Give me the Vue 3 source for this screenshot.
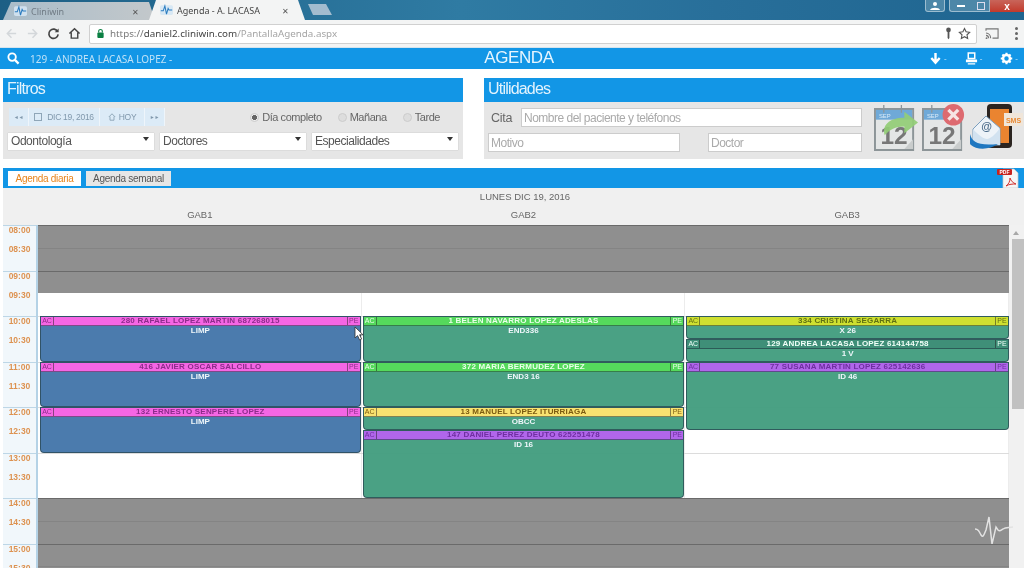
<template>
  <div class="page">
    <!-- barra de pestañas del navegador -->
    <div class="tabstrip">
      <div class="tab">
        <svg class="favicon" viewBox="0 0 16 14"><rect x="0" y="1" width="16" height="12" rx="2" fill="#cfe0ee" /><path d="M1 8h3l2-6 2 10 2-7 1 2h4" fill="none" stroke="#2b7cc0" stroke-width="1.3" /></svg>
        <span class="tab-title">Cliniwin</span>
        <span class="tab-x">✕</span>
      </div>
      <div class="tab active">
        <svg class="favicon" viewBox="0 0 16 14"><rect x="0" y="1" width="16" height="12" rx="2" fill="#d8e8f4" /><path d="M1 8h3l2-6 2 10 2-7 1 2h4" fill="none" stroke="#2b7cc0" stroke-width="1.3" /></svg>
        <span class="tab-title">Agenda - A. LACASA</span>
        <span class="tab-x">✕</span>
      </div>
      <div class="newtab"></div>
      <div class="winctl">
        <div class="winbtn user">
          <svg viewBox="0 0 12 8" width="12" height="8"><circle cx="6" cy="2" r="2" fill="#fff" /><path d="M1 8c1-3 9-3 10 0z" fill="#fff" /></svg>
        </div>
        <div class="winbtn min"><span class="dash"></span></div>
        <div class="winbtn max"><span class="sq"></span></div>
        <div class="winbtn close">x</div>
      </div>
    </div>

    <!-- barra de direcciones -->
    <div class="toolbar">
      <svg class="navicon" viewBox="0 0 14 14"><path d="M12 7H3M7 2.500 2.500 7 7 11.500" fill="none" stroke="#d3d7da" stroke-width="1.6" /></svg>
      <svg class="navicon" viewBox="0 0 14 14"><path d="M2 7h9M7 2.500 11.500 7 7 11.500" fill="none" stroke="#d3d7da" stroke-width="1.6" /></svg>
      <svg class="navicon" viewBox="0 0 14 14"><path d="M11.500 5A5 5 0 1 0 12 8" fill="none" stroke="#444" stroke-width="1.8" /><path d="M12.500 1.500v4.200H8.300z" fill="#444" /></svg>
      <svg class="navicon" viewBox="0 0 14 14"><path d="M1.500 7 7 1.800 12.500 7M3.500 6v6h7V6" fill="none" stroke="#444" stroke-width="1.5" /></svg>
      <div class="omnibox">
        <svg class="lock" viewBox="0 0 10 12"><path d="M3 5V3.500a2 2 0 0 1 4 0V5" fill="none" stroke="#0b8043" stroke-width="1.2" /><rect x="1.500" y="5" width="7" height="6" rx="1" fill="#0b8043" /></svg>
        <span class="url"><span class="url-a">https://</span><span class="url-b">daniel2.cliniwin.com</span><span class="url-c">/PantallaAgenda.aspx</span></span>
        <svg class="omni-icon key" viewBox="0 0 10 14"><circle cx="5" cy="3" r="2.600" fill="#555" /><path d="M4 5h2v7l-1 1.500L4 12z" fill="#555" /></svg>
        <svg class="omni-icon" viewBox="0 0 14 14"><path d="m7 1.600 1.700 3.600 3.800.5-2.800 2.700.7 3.900L7 10.400l-3.400 1.900.7-3.900L1.500 5.700l3.800-.5z" fill="none" stroke="#555" stroke-width="1.2" /></svg>
      </div>
      <svg class="cast" viewBox="0 0 16 14"><path d="M1 4V2h13v10H8M1 6.500a5.500 5.500 0 0 1 5 5.500M1 9a3 3 0 0 1 2.800 3" fill="none" stroke="#777" stroke-width="1.2" /><circle cx="1.600" cy="12" r="1" fill="#777" /></svg>
      <div class="dots"><i></i><i></i><i></i></div>
    </div>

    <!-- barra de la aplicación -->
    <div class="appbar">
      <div class="app-left">
        <svg class="app-search" viewBox="0 0 14 14"><circle cx="5.500" cy="5.500" r="4" fill="none" stroke="#fff" stroke-width="2" /><path d="m8.500 8.500 4 4" stroke="#fff" stroke-width="2.400" /></svg>
        <span class="app-user">129 - ANDREA LACASA LOPEZ -</span>
      </div>
      <div class="app-title">AGENDA</div>
      <div class="app-right">
        <span class="app-tool"><svg viewBox="0 0 14 14"><path d="M7 1v10M2.500 6.500 7 11.500l4.500-5" fill="none" stroke="#fff" stroke-width="2.600" /></svg><b>-</b></span>
        <span class="app-tool"><svg viewBox="0 0 14 14"><path d="M3.500 1h7v6h-7z" fill="none" stroke="#fff" stroke-width="1.600" /><path d="M1 8h12v3H1zM3 12h8v1.500H3z" fill="#fff" /></svg><b>-</b></span>
        <span class="app-tool"><svg viewBox="0 0 14 14"><circle cx="7" cy="7" r="3.700" fill="none" stroke="#fff" stroke-width="2.600" /><path d="M7 .8v2.400M7 10.800v2.400M.8 7h2.400M10.800 7h2.400M2.600 2.600l1.700 1.700M9.700 9.700l1.700 1.700M2.600 11.400l1.700-1.700M9.700 4.300l1.700-1.700" stroke="#fff" stroke-width="2.300" /></svg><b>-</b></span>
      </div>
    </div>

    <!-- paneles -->
    <div class="panels">
      <section class="panel filtros">
        <h2>Filtros</h2>
        <div class="panel-body">
          <div class="filter-row">
            <div class="datebar">
              <span class="db-btn nav">◄◄</span>
              <span class="db-btn date"><i class="mini-cal"></i>DIC 19, 2016</span>
              <span class="db-btn hoy"><svg viewBox="0 0 10 10" width="8" height="8"><path d="M1 5 5 1l4 4M2.500 4.500V9h5V4.500" fill="none" stroke="#8fa6b8" stroke-width="1.200" /></svg>HOY</span>
              <span class="db-btn nav">►►</span>
            </div>
            <div class="radios">
              <label v-for="r in radios" :key="r.label" class="radio">
                <i class="dot" :class="{ on: r.on }"></i>{{ r.label }}
              </label>
            </div>
          </div>
          <div class="selects">
            <div v-for="s in selects" :key="s" class="selwrap">
              <select><option>{{ s }}</option></select>
            </div>
          </div>
        </div>
      </section>

      <section class="panel utilidades">
        <h2>Utilidades</h2>
        <div class="panel-body util-body">
          <div class="util-form">
            <div class="util-row first">
              <label class="cita">Cita</label>
              <input class="inp nombre" type="text" placeholder="Nombre del paciente y teléfonos" />
            </div>
            <div class="util-row">
              <input class="inp motivo" type="text" placeholder="Motivo" />
              <input class="inp doctor" type="text" placeholder="Doctor" />
            </div>
          </div>
          <div class="util-icons">
            <svg class="cal" viewBox="0 0 46 48">
              <path d="M1 5h39v42H1z" fill="#e4e6e6" stroke="#8d9598" stroke-width="2" />
              <rect x="2" y="6" width="37" height="10" fill="#6fa9d8" />
              <path d="M10 1v8M28 1v8" stroke="#8d9598" stroke-width="1.300" />
              <path d="M40 36 31 46h9z" fill="#c9cccc" />
              <text x="5" y="14" class="cal-sep">SEP</text>
              <text x="20.500" y="41" class="cal-num">12</text>
              <path d="M11 32c-3-10 4-18 20-18V8l14 11-14 11v-7c-9 0-15 3-20 9z" fill="#93cd76" opacity=".92" />
            </svg>
            <svg class="cal" viewBox="0 0 46 48">
              <path d="M1 5h39v42H1z" fill="#e4e6e6" stroke="#8d9598" stroke-width="2" />
              <rect x="2" y="6" width="37" height="10" fill="#6fa9d8" />
              <path d="M10 1v8M28 1v8" stroke="#8d9598" stroke-width="1.300" />
              <path d="M40 36 31 46h9z" fill="#c9cccc" />
              <text x="5" y="14" class="cal-sep">SEP</text>
              <text x="20.500" y="41" class="cal-num">12</text>
              <circle cx="32" cy="11" r="11" fill="#dd6a70" />
              <path d="m27 6 10 10M37 6 27 16" stroke="#f6e4e4" stroke-width="3.400" />
            </svg>
            <svg class="sms" viewBox="0 0 54 46">
              <rect x="17" y="0" width="25" height="44" rx="4" fill="#2b2420" />
              <rect x="20" y="5" width="19" height="34" fill="#ea8430" />
              <rect x="34" y="9" width="19" height="13" fill="#f0e6da" />
              <text x="43.500" y="18.500" class="sms-text">SMS</text>
              <path d="M3 25 16 12l14 12v17H3z" fill="#eef3f8" stroke="#7b9fbf" stroke-width="1" />
              <path d="M3 25c5 6 11 10 14 10s8-4 13-11v17H3z" fill="#d2e2f0" />
              <path d="M0 30c2 8 8 12 28 10-8 6-22 6-27 1-2-2-2-7-1-11z" fill="#1f77c0" />
              <text x="16.500" y="26" class="at">@</text>
            </svg>
          </div>
        </div>
      </section>
    </div>

    <!-- pestañas de agenda -->
    <div class="viewbar">
      <button class="vtab on">Agenda diaria</button>
      <button class="vtab">Agenda semanal</button>
      <svg class="pdf" viewBox="0 0 22 21">
        <path d="M6 1h11l4 4v15H6z" fill="#f6f6f6" stroke="#c8c8c8" stroke-width=".7" />
        <rect x="0" y="1" width="15" height="6" rx="1" fill="#c8231f" />
        <text x="7.500" y="5.800" class="pdf-text">PDF</text>
        <path d="M9 18c3-2 4-5 4-8 1 3 3 5 6 6-3 0-7 0-10 2z" fill="none" stroke="#d0302c" stroke-width="1" />
      </svg>
    </div>

    <!-- cabecera del calendario -->
    <div class="cal-head">
      <div class="cal-date">LUNES DIC 19, 2016</div>
      <div class="cal-cols">
        <span></span>
        <span v-for="c in columns" :key="c.name" class="cal-col-name">{{ c.name }}</span>
        <span></span>
      </div>
    </div>

    <!-- calendario -->
    <div class="calendar">
      <div class="hours">
        <div v-for="h in hours" :key="h" class="hour">
          <span>{{ h }}:00</span>
          <span>{{ h }}:30</span>
        </div>
      </div>
      <div v-for="c in columns" :key="c.name" class="col">
        <div
          v-for="(s, i) in slots"
          :key="i"
          class="slot"
          :class="{ off: s.off, full: s.full }"
        ></div>
        <div
          v-for="e in c.events"
          :key="e.name"
          class="event"
          :class="e.body"
          :style="eventStyle(e)"
        >
          <div class="ev-head" :class="e.color">
            <span class="ev-tag">AC</span>
            <span class="ev-name">{{ e.name }}</span>
            <span class="ev-tag pe">PE</span>
          </div>
          <div class="ev-sub">{{ e.sub }}</div>
        </div>
      </div>
      <div class="scrollbar">
        <span class="arrow up"></span>
        <div class="thumb"></div>
        <span class="arrow down"></span>
      </div>

      <svg class="watermark" viewBox="0 0 38 28"><path d="M0 13c3 0 4 2 6 6 2 3 3 0 5-5l3-13 3 27 4-17 2 3c2 2 3 0 5-1 3-2 6-1 10-2" fill="none" stroke="#e2e2e2" stroke-width="1.500" /></svg>
      <svg class="pointer" viewBox="0 0 10 15"><path d="M1 1v11l2.600-2.400L5.600 14l2-1-2-4.200h3.400z" fill="#fff" stroke="#333" stroke-width=".8" /></svg>
    </div>
  </div>
</template>

<script setup>
const HOUR = 45.5

const radios = [
  { label: 'Día completo', on: true },
  { label: 'Mañana', on: false },
  { label: 'Tarde', on: false },
]
const selects = ['Odontología', 'Doctores', 'Especialidades']
const hours = ['08', '09', '10', '11', '12', '13', '14', '15']

const slots = Array.from({ length: 16 }, (_, i) => ({
  off: i < 3 || i >= 12,
  full: i % 2 === 0,
}))

// start y end en horas
const columns = [
  {
    name: 'GAB1',
    events: [
      { start: 10, end: 11, color: 'pink', body: 'blue', name: '280 RAFAEL LOPEZ MARTIN 687268015', sub: 'LIMP' },
      { start: 11, end: 12, color: 'pink', body: 'blue', name: '416 JAVIER OSCAR SALCILLO', sub: 'LIMP' },
      { start: 12, end: 13, color: 'pink', body: 'blue', name: '132 ERNESTO SENPERE LOPEZ', sub: 'LIMP' },
    ],
  },
  {
    name: 'GAB2',
    events: [
      { start: 10, end: 11, color: 'green', body: 'teal', name: '1 BELEN NAVARRO LOPEZ ADESLAS', sub: 'END336' },
      { start: 11, end: 12, color: 'green', body: 'teal', name: '372 MARIA BERMUDEZ LOPEZ', sub: 'END3 16' },
      { start: 12, end: 12.5, color: 'yellow', body: 'teal', name: '13 MANUEL LOPEZ ITURRIAGA', sub: 'OBCC' },
      { start: 12.5, end: 14, color: 'purple', body: 'teal', name: '147 DANIEL PEREZ DEUTO 625251478', sub: 'ID 16' },
    ],
  },
  {
    name: 'GAB3',
    events: [
      { start: 10, end: 10.5, color: 'lime', body: 'teal', name: '334 CRISTINA SEGARRA', sub: 'X 26' },
      { start: 10.5, end: 11, color: 'same', body: 'teal', name: '129 ANDREA LACASA LOPEZ 614144758', sub: '1 V' },
      { start: 11, end: 12.5, color: 'purple', body: 'teal', name: '77 SUSANA MARTIN LOPEZ 625142636', sub: 'ID 46' },
    ],
  },
]

const eventStyle = (e) => ({
  top: (e.start - 8) * HOUR + 'px',
  height: (e.end - e.start) * HOUR + 'px',
})
</script>

<style>
html,
body {
  margin: 0;
  background: #fff;
  overflow: hidden;
}
</style>

<style scoped>
.page {
  width: 1024px;
  height: 573px;
  overflow: hidden;
  display: flex;
  flex-direction: column;
  font-family: "Liberation Sans", Arial, sans-serif;
  color: #555;
  background: #fff;
  filter: blur(0.5px);
}

/* navegador */
.tabstrip {
  height: 20px;
  flex: none;
  display: flex;
  align-items: flex-end;
  padding-left: 3px;
  background: linear-gradient(90deg, #1d5f85 0%, #2f7ba3 45%, #286f9a 70%, #1f6590 100%);
}
.tab {
  width: 152px;
  height: 18px;
  margin-right: -6px;
  display: flex;
  align-items: center;
  padding: 0 6px 0 11px;
  box-sizing: border-box;
  background: linear-gradient(90deg, #a9bcc9, #c3c8cb);
  clip-path: polygon(0 100%, 8px 0, 146px 0, 152px 100%);
  font-family: "Noto Sans", sans-serif;
  font-size: 9px;
  color: #6f7a84;
}
.tab.active {
  width: 156px;
  height: 20px;
  background: #f3f4f4;
  color: #444;
  padding-left: 11px;
  clip-path: polygon(0 100%, 7px 0, 149px 0, 156px 100%);
}
.favicon {
  width: 13px;
  height: 12px;
  margin-right: 4px;
  flex: none;
}
.tab-title {
  flex: 1;
  white-space: nowrap;
}
.tab-x {
  font-size: 8px;
  color: #555;
  margin-right: 10px;
}
.newtab {
  width: 24px;
  height: 11px;
  margin: 0 0 5px 9px;
  background: #a3bccf;
  clip-path: polygon(0 0, 18px 0, 24px 100%, 5px 100%);
}
.winctl {
  margin-left: auto;
  align-self: flex-start;
  display: flex;
  height: 12px;
}
.winbtn {
  height: 12px;
  display: flex;
  align-items: center;
  justify-content: center;
  box-sizing: border-box;
  background: #4d87a8;
  border: 1px solid #9cbdd0;
  border-top: 0;
}
.user {
  width: 20px;
  margin-right: 4px;
  border-radius: 0 0 3px 3px;
}
.min {
  width: 23px;
  border-right: 0;
  border-radius: 0 0 0 3px;
}
.max {
  width: 18px;
  border-left: 0;
}
.close {
  width: 34px;
  background: linear-gradient(#c8655a, #c23a2c);
  border: 0;
  color: #fff;
  font-size: 10px;
  font-weight: bold;
}
.dash {
  width: 8px;
  height: 2px;
  background: #fff;
}
.sq {
  width: 6px;
  height: 6px;
  border: 1px solid #dde;
}
.toolbar {
  height: 27px;
  flex: none;
  display: flex;
  align-items: center;
  padding-left: 5px;
  background: #f3f4f4;
  border-bottom: 1px solid #d5e4ee;
}
.navicon {
  width: 13px;
  height: 13px;
  margin-right: 8px;
}
.omnibox {
  width: 888px;
  height: 20px;
  box-sizing: border-box;
  display: flex;
  align-items: center;
  background: #fff;
  border: 1px solid #d0d0d0;
  border-radius: 2px;
  padding: 0 5px 0 6px;
}
.lock {
  width: 9px;
  height: 11px;
  margin-right: 5px;
}
.url {
  flex: 1;
  font-family: "Noto Sans", sans-serif;
  font-size: 9.800px;
  white-space: nowrap;
}
.url-a {
  color: #7a7a7a;
}
.url-b {
  color: #444;
}
.url-c {
  color: #a5a5a5;
}
.omni-icon {
  width: 13px;
  height: 13px;
  margin-left: 5px;
}
.key {
  width: 9px;
}
.cast {
  width: 15px;
  height: 13px;
  margin-left: 8px;
}
.dots {
  display: flex;
  flex-direction: column;
  gap: 2px;
  margin-left: 15px;
}
.dots i {
  width: 3px;
  height: 3px;
  border-radius: 50%;
  background: #666;
}

/* barra azul */
.appbar {
  height: 21px;
  flex: none;
  display: grid;
  grid-template-columns: 1fr auto 1fr;
  align-items: center;
  background: #1296e6;
  color: #fff;
}
.app-left {
  display: flex;
  align-items: center;
  padding-left: 7px;
}
.app-search {
  width: 13px;
  height: 13px;
  margin-right: 10px;
}
.app-user {
  font-family: "Noto Sans", sans-serif;
  font-size: 10px;
  color: #bfe2f8;
  white-space: nowrap;
}
.app-title {
  font-size: 17px;
  letter-spacing: -0.4px;
  line-height: 19px;
  color: #e6f5fe;
  transform: translateX(7px) translateY(-1px);
}
.app-right {
  display: flex;
  justify-content: flex-end;
  gap: 18px;
  padding-right: 6px;
}
.app-tool {
  display: flex;
  align-items: center;
  gap: 2px;
}
.app-tool svg {
  width: 13px;
  height: 13px;
}
.app-tool b {
  font-size: 8px;
  font-weight: normal;
  color: #cbe8fb;
}

/* paneles */
.panels {
  flex: none;
  display: flex;
  justify-content: space-between;
  margin-top: 9px;
  padding-left: 3px;
}
.panel h2 {
  margin: 0;
  height: 24px;
  line-height: 22px;
  padding-left: 4px;
  font-size: 16px;
  font-weight: normal;
  letter-spacing: -0.8px;
  color: #e3f3fd;
  background: #1296e6;
}
.panel-body {
  height: 57px;
  background: #e6e6e6;
  box-sizing: border-box;
}
.filtros {
  width: 460px;
}
.utilidades {
  width: 540px;
}
.filter-row {
  display: flex;
  align-items: flex-start;
  justify-content: space-between;
  height: 27px;
  padding: 6px 23px 0 6px;
  box-sizing: border-box;
}
.datebar {
  display: flex;
  height: 18px;
  background: #dcebf7;
  font-size: 8.500px;
  letter-spacing: -0.3px;
  color: #8098ac;
}
.db-btn {
  display: flex;
  align-items: center;
  justify-content: center;
  gap: 3px;
  border-right: 1px solid #eef5fb;
}
.db-btn.nav {
  width: 19px;
  font-size: 5px;
}
.db-btn.date {
  width: 70px;
}
.db-btn.hoy {
  width: 44px;
}
.mini-cal {
  width: 6px;
  height: 6px;
  border: 1px solid #8fa6b8;
  margin-right: 2px;
}
.radios {
  display: flex;
  gap: 16px;
  height: 18px;
  font-size: 11px;
  letter-spacing: -0.45px;
  color: #666;
}
.radio {
  display: flex;
  align-items: center;
  gap: 3px;
}
.dot {
  width: 7px;
  height: 7px;
  border-radius: 50%;
  background: #ddd;
  border: 1px solid #ccc;
}
.dot.on {
  background: radial-gradient(circle, #666 45%, #eee 55%);
}
.selects {
  display: flex;
  gap: 6px;
  padding: 2px 0 0 5px;
}
.selwrap {
  width: 146px;
  height: 17px;
  position: relative;
}
.selwrap::after {
  content: "";
  position: absolute;
  right: 5px;
  top: 6px;
  border: 3px solid transparent;
  border-top: 4px solid #333;
  pointer-events: none;
}
.selwrap select {
  appearance: none;
  width: 100%;
  height: 100%;
  border: 0;
  border-radius: 0;
  background: #fff;
  padding: 0 0 0 3px;
  font: 12px "Liberation Sans", Arial, sans-serif;
  letter-spacing: -0.45px;
  color: #555;
  box-shadow: 0 0 1px #aaa;
}
.util-body {
  display: flex;
}
.util-form {
  width: 379px;
  padding: 6px 0 0 4px;
  box-sizing: border-box;
}
.util-row {
  display: flex;
  align-items: center;
  height: 19px;
}
.util-row.first {
  margin-bottom: 6px;
}
.cita {
  width: 33px;
  padding-left: 3px;
  box-sizing: border-box;
  font-size: 12.500px;
  letter-spacing: -0.3px;
  color: #666;
}
.inp {
  height: 19px;
  box-sizing: border-box;
  border: 1px solid #ccc;
  background: #fff;
  padding: 0 2px;
  font: 12px "Liberation Sans", Arial, sans-serif;
  letter-spacing: -0.5px;
  outline: none;
}
.inp::placeholder {
  color: #aaa;
}
.nombre {
  width: 341px;
}
.motivo {
  width: 192px;
}
.doctor {
  width: 154px;
  margin-left: 28px;
}
.util-icons {
  display: flex;
  gap: 3px;
  margin: 2px 0 0 12px;
  align-items: flex-start;
}
.cal {
  width: 45px;
  height: 47px;
}
.sms {
  width: 54px;
  height: 46px;
}
.cal-sep {
  font: 6px "Liberation Sans", sans-serif;
  fill: #dcecf8;
}
.cal-num {
  font: bold 25px "Liberation Sans", sans-serif;
  fill: #777;
  text-anchor: middle;
}
.sms-text {
  font: bold 7px "Liberation Sans", sans-serif;
  fill: #e88a36;
  text-anchor: middle;
}
.at {
  font: bold 11px "Liberation Sans", sans-serif;
  fill: #4a6a88;
  text-anchor: middle;
}

/* pestañas */
.viewbar {
  flex: none;
  height: 20px;
  margin: 9px 0 0 3px;
  display: flex;
  align-items: center;
  gap: 5px;
  padding-left: 5px;
  background: #1296e6;
}
.vtab {
  height: 15px;
  padding: 0;
  width: 73px;
  border: 0;
  background: #fff;
  font: 10px "Liberation Sans", Arial, sans-serif;
  letter-spacing: -0.3px;
  color: #e8841c;
}
.vtab:not(.on) {
  width: 85px;
  background: #e6e6e6;
  color: #555;
}
.pdf {
  width: 22px;
  height: 21px;
  margin: 0 5px 0 auto;
}
.pdf-text {
  font: bold 5px "Liberation Sans", sans-serif;
  fill: #fff;
  text-anchor: middle;
}

/* calendario */
.cal-head {
  flex: none;
  height: 37px;
  margin-left: 3px;
  background: #f0f0f0;
  font-size: 9.500px;
  color: #666;
  text-align: center;
}
.cal-date {
  padding: 3px 0 0 23px;
  height: 18px;
  box-sizing: border-box;
  line-height: 11px;
}
.cal-cols {
  display: grid;
  grid-template-columns: 35px repeat(3, 1fr) 15px;
  line-height: 17px;
}
.calendar {
  flex: none;
  position: relative;
  height: 343px;
  margin-left: 3px;
  overflow: hidden;
  display: grid;
  grid-template-columns: 35px repeat(3, 1fr) 15px;
}
.hours {
  background: #f1f7fb;
  border-right: 2px solid #b4d2e6;
  box-sizing: border-box;
}
.hour {
  height: 45.500px;
  box-sizing: border-box;
  border-top: 1px solid #bdd6e6;
  display: flex;
  flex-direction: column;
  gap: 10px;
  align-items: center;
  font-size: 8.500px;
  line-height: 9px;
  font-weight: bold;
  color: #dd9250;
}
.col {
  position: relative;
  background: #fff;
  box-shadow: inset -1px 0 0 #ececec;
  min-width: 0;
}
.slot {
  height: 22.750px;
  box-sizing: border-box;
}
.slot.full {
  border-top: 1px solid #dcdcdc;
}
.slot.off {
  background: #8f8f8f;
  border-top: 1px solid #848484;
}
.slot.off.full {
  border-top: 1px solid #6a6a6a;
}
.event {
  position: absolute;
  left: 1px;
  right: 1px;
  box-sizing: border-box;
  border: 1px solid rgba(40, 70, 80, 0.75);
  border-radius: 0 0 4px 4px;
  overflow: hidden;
  text-align: center;
}
.col:nth-child(2) .event {
  left: 2px;
}
.col:nth-child(4) .event {
  right: 0;
}
.event.blue {
  background: rgba(69, 119, 170, 0.97);
}
.event.teal {
  background: rgba(68, 158, 128, 0.97);
}
.ev-head {
  height: 8px;
  display: flex;
  font-size: 8px;
  line-height: 8px;
  font-weight: bold;
  border-bottom: 1px solid rgba(30, 50, 60, 0.55);
}
.ev-tag {
  width: 12px;
  flex: none;
  font-size: 7px;
  font-weight: normal;
  border-right: 1px solid rgba(30, 30, 30, 0.5);
}
.ev-tag.pe {
  border-right: 0;
  border-left: 1px solid rgba(30, 30, 30, 0.5);
}
.ev-name {
  flex: 1;
  white-space: nowrap;
  overflow: hidden;
  letter-spacing: 0.2px;
}
.pink {
  background: #f566e4;
  color: #8c2c8a;
}
.green {
  background: #55d95c;
  color: #eaffea;
}
.yellow {
  background: #f8e270;
  color: #7b5a10;
}
.purple {
  background: #b066ea;
  color: #6f2ea0;
}
.lime {
  background: #cfe030;
  color: #5f7012;
}
.same {
  background: #3f8f78;
  color: #f0fff8;
}
.ev-sub {
  font-size: 8px;
  line-height: 10px;
  font-weight: bold;
  color: #eef6fa;
  white-space: nowrap;
}
.scrollbar {
  background: #f1f1f1;
  display: flex;
  flex-direction: column;
  align-items: center;
}
.thumb {
  width: 12px;
  height: 170px;
  margin: 4px 0 0 3px;
  background: #c1c1c1;
}
.arrow {
  width: 0;
  height: 0;
  border: 3px solid transparent;
}
.arrow.up {
  margin-top: 3px;
  border-bottom: 4px solid #a8a8a8;
}
.arrow.down {
  margin-top: auto;
  margin-bottom: 2px;
  border-top: 4px solid #444;
}
.watermark {
  position: absolute;
  left: 972px;
  top: 291px;
  width: 38px;
  height: 28px;
}
.pointer {
  position: absolute;
  left: 351px;
  top: 101px;
  width: 10px;
  height: 15px;
}
</style>
